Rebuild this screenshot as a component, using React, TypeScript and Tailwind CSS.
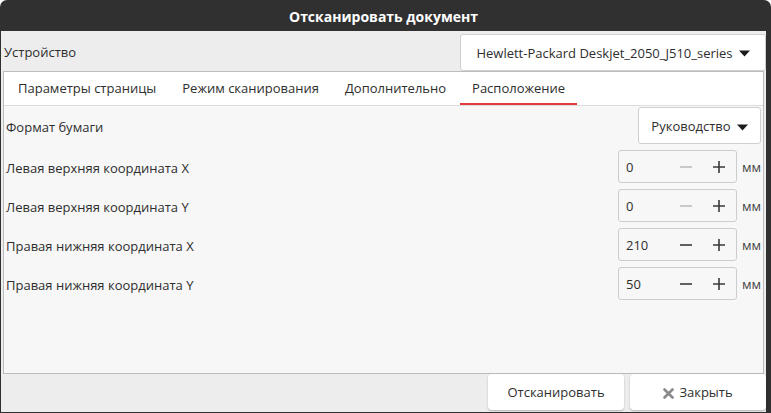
import React from "react";

const font = { fontFamily: "'Open Sans', 'Noto Sans', sans-serif" };

function Caret() {
  return (
    <svg width="11" height="7" viewBox="0 0 11 7" className="ml-[6px] shrink-0">
      <path d="M0 0.5 L11 0.5 L5.5 6.5 Z" fill="#1c1c1c" />
    </svg>
  );
}

function Spin({ value, canDec }: { value: string; canDec: boolean }) {
  return (
    <div className="flex items-center w-[119px] h-[33px] bg-[#f7f7f7] border border-[#cdcdcd] rounded-[3px]">
      <span className="w-[50px] pl-[7px] pt-[3px] text-[13px] text-[#2e2e2e]">{value}</span>
      <div className="flex-1 flex items-center justify-center">
        <svg width="12" height="12" viewBox="0 0 12 12">
          <path d="M0 6 H12" stroke={canDec ? "#3a3a3a" : "#bdbdbd"} strokeWidth="1.6" />
        </svg>
      </div>
      <div className="flex-1 flex items-center justify-center">
        <svg width="12" height="12" viewBox="0 0 12 12">
          <path d="M0 6 H12 M6 0 V12" stroke="#3a3a3a" strokeWidth="1.6" />
        </svg>
      </div>
    </div>
  );
}

const coords = [
  { label: "Левая верхняя координата X", value: "0", canDec: false },
  { label: "Левая верхняя координата Y", value: "0", canDec: false },
  { label: "Правая нижняя координата X", value: "210", canDec: true },
  { label: "Правая нижняя координата Y", value: "50", canDec: true },
];

const tabs = ["Параметры страницы", "Режим сканирования", "Дополнительно", "Расположение"];

export default function App() {
  return (
    <div
      className="w-[771px] h-[413px] bg-[#303030] rounded-t-[7px] flex flex-col overflow-hidden text-[#2e2e2e]"
      style={font}
    >
      {/* Title bar */}
      <div className="h-[31px] shrink-0 flex items-center justify-center text-white font-bold text-[14px] pr-[4px] pt-[1px]">
        Отсканировать документ
      </div>

      <div className="flex-1 flex flex-col bg-[#ededed] ml-[1px] mr-[5px] mb-[1px]">
        {/* Device row */}
        <div className="h-[40px] flex items-center justify-between pl-[3px]">
          <span className="text-[13px] pt-[4px]">Устройство</span>
          <button className="h-[37px] w-[306px] mt-[2px] pt-[3px] flex items-center justify-center bg-white border border-[#cfcfcf] rounded-[3px] text-[13px] text-[#2e2e2e]">
            Hewlett-Packard Deskjet_2050_J510_series
            <Caret />
          </button>
        </div>

        {/* Notebook */}
        <div className="h-[303px] mx-[2px] border border-[#bcbcbc] flex flex-col">
          <div className="h-[34px] shrink-0 bg-white border-b border-[#dcdcdc] flex gap-[2px] pl-[2px]">
            {tabs.map((t, i) => (
              <div
                key={t}
                className={`px-[12px] pt-[3px] flex items-center text-[13px] border-b-2 ${
                  i === 3 ? "border-[#e53b3b]" : "border-transparent"
                }`}
              >
                {t}
              </div>
            ))}
          </div>

          <div className="flex-1 bg-[#f7f7f7] pl-[2px] pr-[2px] pt-[1px] flex flex-col gap-[6px]">
            <div className="flex items-center justify-between h-[37px]">
              <span className="text-[13px] pt-[4px]">Формат бумаги</span>
              <button className="h-[37px] w-[123px] pt-[3px] flex items-center justify-center bg-white border border-[#cfcfcf] rounded-[3px] text-[13px] text-[#2e2e2e]">
                Руководство
                <Caret />
              </button>
            </div>
            {coords.map((c) => (
              <div key={c.label} className="flex items-center justify-between h-[33px]">
                <span className="text-[13px] pt-[4px]">{c.label}</span>
                <div className="flex items-center gap-[5px]">
                  <Spin value={c.value} canDec={c.canDec} />
                  <span className="text-[13px] w-[19px] pt-[3px] text-[#444]">мм</span>
                </div>
              </div>
            ))}
          </div>
        </div>

        {/* Action buttons */}
        <div className="flex-1 flex justify-end items-end gap-[6px] pb-[2px]">
          <button className="w-[136px] h-[36px] pt-[2px] bg-white rounded-[4px] shadow-[0_1px_2px_rgba(0,0,0,0.25)] text-[13px] text-[#2e2e2e]">
            Отсканировать
          </button>
          <button className="w-[136px] h-[36px] pt-[2px] bg-white rounded-[4px] shadow-[0_1px_2px_rgba(0,0,0,0.25)] text-[13px] text-[#2e2e2e] flex items-center justify-center gap-[5px]">
            <svg width="11" height="11" viewBox="0 0 11 11">
              <path d="M1.5 1.5 L9.5 9.5 M9.5 1.5 L1.5 9.5" stroke="#8a8a8a" strokeWidth="2.6" strokeLinecap="round" />
            </svg>
            Закрыть
          </button>
        </div>
      </div>
    </div>
  );
}
